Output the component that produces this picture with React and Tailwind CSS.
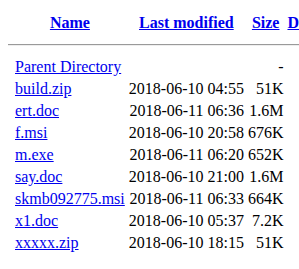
import React from "react";

const rows = [
  ["Parent Directory", "", "-"],
  ["build.zip", "2018-06-10 04:55", "51K"],
  ["ert.doc", "2018-06-11 06:36", "1.6M"],
  ["f.msi", "2018-06-10 20:58", "676K"],
  ["m.exe", "2018-06-11 06:20", "652K"],
  ["say.doc", "2018-06-10 21:00", "1.6M"],
  ["skmb092775.msi", "2018-06-11 06:33", "664K"],
  ["x1.doc", "2018-06-10 05:37", "7.2K"],
  ["xxxxx.zip", "2018-06-10 18:15", "51K"],
];

export default function App() {
  return (
    <div className="w-[299px] h-[269px] overflow-hidden bg-white text-black text-[16px] leading-[18px]" style={{ fontFamily: '"Liberation Serif", "Times New Roman", serif' }}>
      <div className="ml-2 mt-[11px] w-max">
        <table className="border-separate border-spacing-[2px] whitespace-nowrap">
          <tbody>
            <tr>
              <th className="p-[1px] align-top"></th>
              <th className="p-[1px] text-center font-bold"><a className="text-[#0000ee] underline">Name</a></th>
              <th className="p-[1px] text-center font-bold"><a className="text-[#0000ee] underline">Last modified</a></th>
              <th className="p-[1px] text-center font-bold"><a className="text-[#0000ee] underline">Size</a></th>
              <th className="p-[1px] text-center font-bold"><a className="text-[#0000ee] underline">Description</a></th>
            </tr>
            <tr>
              <th colSpan={5} className="p-[1px]">
                <hr className="my-2 -ml-[3px] border-t border-b border-t-[#9a9a9a] border-b-[#eeeeee] h-0" />
              </th>
            </tr>
            {rows.map(([n, d, s]) => (
              <tr key={n}>
                <td className="p-[1px] align-top"></td>
                <td className="p-[1px]"><a className="text-[#0000ee] underline">{n}</a></td>
                <td className="p-[1px] text-right">{d || "\u00a0"}</td>
                <td className="p-[1px] text-right">{s === "-" ? "\u00a0 - " : s}</td>
                <td className="p-[1px]">&nbsp;</td>
              </tr>
            ))}
          </tbody>
        </table>
      </div>
    </div>
  );
}
